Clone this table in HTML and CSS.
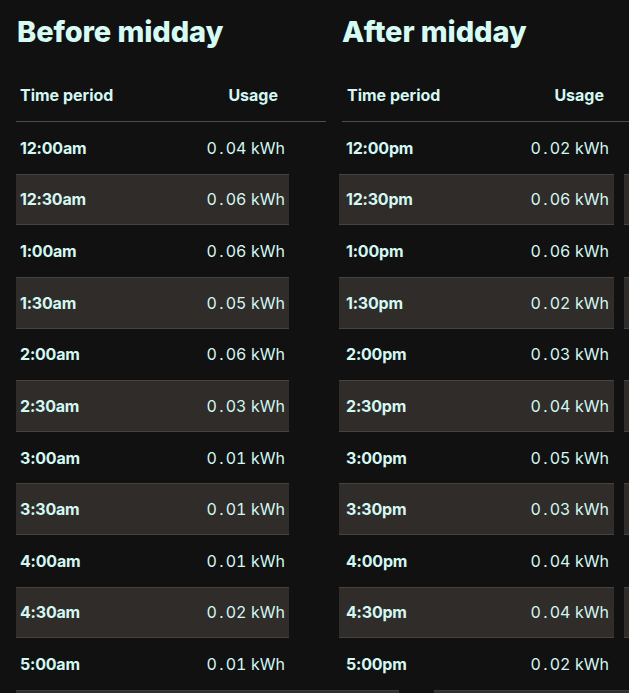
FILE: index.html
```html
<!DOCTYPE html>
<html lang="en">
<head>
<meta charset="utf-8">
<title>Usage by time period</title>
<link rel="stylesheet" href="styles.css">
</head>
<body>
<div class="tables">
  <section class="col col-a">
    <h2 class="title">Before midday</h2>
    <div class="thead"><span class="th-time">Time period</span><span class="th-usage">Usage</span></div>
    <div class="row"><span class="time">12:00am</span><span class="val"><span class="num">0<span class="dot">.</span>04</span> kWh</span></div>
    <div class="row stripe"><span class="time">12:30am</span><span class="val"><span class="num">0<span class="dot">.</span>06</span> kWh</span></div>
    <div class="row"><span class="time">1:00am</span><span class="val"><span class="num">0<span class="dot">.</span>06</span> kWh</span></div>
    <div class="row stripe"><span class="time">1:30am</span><span class="val"><span class="num">0<span class="dot">.</span>05</span> kWh</span></div>
    <div class="row"><span class="time">2:00am</span><span class="val"><span class="num">0<span class="dot">.</span>06</span> kWh</span></div>
    <div class="row stripe"><span class="time">2:30am</span><span class="val"><span class="num">0<span class="dot">.</span>03</span> kWh</span></div>
    <div class="row"><span class="time">3:00am</span><span class="val"><span class="num">0<span class="dot">.</span>01</span> kWh</span></div>
    <div class="row stripe"><span class="time">3:30am</span><span class="val"><span class="num">0<span class="dot">.</span>01</span> kWh</span></div>
    <div class="row"><span class="time">4:00am</span><span class="val"><span class="num">0<span class="dot">.</span>01</span> kWh</span></div>
    <div class="row stripe"><span class="time">4:30am</span><span class="val"><span class="num">0<span class="dot">.</span>02</span> kWh</span></div>
    <div class="row"><span class="time">5:00am</span><span class="val"><span class="num">0<span class="dot">.</span>01</span> kWh</span></div>
  </section>
  <section class="col col-b">
    <h2 class="title">After midday</h2>
    <div class="thead"><span class="th-time">Time period</span><span class="th-usage">Usage</span></div>
    <div class="row"><span class="time">12:00pm</span><span class="val"><span class="num">0<span class="dot">.</span>02</span> kWh</span></div>
    <div class="row stripe"><span class="time">12:30pm</span><span class="val"><span class="num">0<span class="dot">.</span>06</span> kWh</span></div>
    <div class="row"><span class="time">1:00pm</span><span class="val"><span class="num">0<span class="dot">.</span>06</span> kWh</span></div>
    <div class="row stripe"><span class="time">1:30pm</span><span class="val"><span class="num">0<span class="dot">.</span>02</span> kWh</span></div>
    <div class="row"><span class="time">2:00pm</span><span class="val"><span class="num">0<span class="dot">.</span>03</span> kWh</span></div>
    <div class="row stripe"><span class="time">2:30pm</span><span class="val"><span class="num">0<span class="dot">.</span>04</span> kWh</span></div>
    <div class="row"><span class="time">3:00pm</span><span class="val"><span class="num">0<span class="dot">.</span>05</span> kWh</span></div>
    <div class="row stripe"><span class="time">3:30pm</span><span class="val"><span class="num">0<span class="dot">.</span>03</span> kWh</span></div>
    <div class="row"><span class="time">4:00pm</span><span class="val"><span class="num">0<span class="dot">.</span>04</span> kWh</span></div>
    <div class="row stripe"><span class="time">4:30pm</span><span class="val"><span class="num">0<span class="dot">.</span>04</span> kWh</span></div>
    <div class="row"><span class="time">5:00pm</span><span class="val"><span class="num">0<span class="dot">.</span>02</span> kWh</span></div>
  </section>
  <section class="col col-c" aria-hidden="true">
    <div class="title-space"></div>
    <div class="thead"></div>
    <div class="row"></div>
    <div class="row stripe"></div>
    <div class="row"></div>
    <div class="row stripe"></div>
    <div class="row"></div>
    <div class="row stripe"></div>
    <div class="row"></div>
    <div class="row stripe"></div>
    <div class="row"></div>
    <div class="row stripe"></div>
    <div class="row"></div>
  </section>
</div>
<div class="below">
  <div class="panel panel-wide"></div>
  <div class="panel panel-rest"></div>
</div>
</body>
</html>
```

FILE: styles.css
```css
html, body {
  margin: 0;
  padding: 0;
  background: #111111;
  overflow: hidden;
}
body {
  padding-top: 12px;
  font-family: Inter, Lato, "Noto Sans", sans-serif;
  color: #d3f8f3;
  width: 629px;
  height: 693px;
  box-sizing: border-box;
}
.tables {
  display: flex;
  padding-left: 16px;
  width: 1000px;
}
.col {
  display: flex;
  flex-direction: column;
  flex: none;
}
.col-a { width: 323px; }
.col-b { width: 285px; }
.col-c { width: 300px; }

.title,
.title-space {
  margin: 0 0 17px 0;
  font-size: 29px;
  line-height: 40px;
  height: 40px;
  font-weight: 800;
  letter-spacing: -0.1px;
  padding-left: 1px;
  color: #d6fbf5;
}
.col-b .title { padding-left: 3px; }

.thead {
  display: flex;
  justify-content: space-between;
  align-items: center;
  height: 53px;
  box-sizing: border-box;
  border-bottom: 1px solid #4c4c4c;
  font-size: 16px;
  font-weight: 700;
  padding: 0 48px 0 4px;
  margin-right: 13px;
}
.col-b .thead {
  margin-left: 3px;
  margin-right: 0;
  padding: 0 20px 0 5px;
}
.col-c .thead { margin-right: 0; }

.row {
  display: flex;
  justify-content: space-between;
  align-items: center;
  height: 51.625px;
  box-sizing: border-box;
  width: 273px;
  padding: 0 4px;
  font-size: 16px;
}
.col-b .row { width: 275px; padding: 0 5px 0 7px; }
.col-c .row { width: 275px; }

.stripe {
  background: #302c29;
  border-top: 1px solid #46423e;
  border-bottom: 1px solid #46423e;
}
.time {
  font-weight: 700;
  letter-spacing: -0.2px;
}
.val {
  font-weight: 400;
}
.num {
  font-variant-numeric: tabular-nums;
}
.dot {
  display: inline-block;
  width: 0.55em;
  text-align: center;
}

.below {
  display: flex;
  gap: 35px;
  padding-left: 16px;
}
.panel {
  height: 20px;
  background: #302d2b;
  border-top: 1px solid #3d3a37;
}
.panel-wide { width: 383px; flex: none; }
.panel-rest { flex: 1; }
```
